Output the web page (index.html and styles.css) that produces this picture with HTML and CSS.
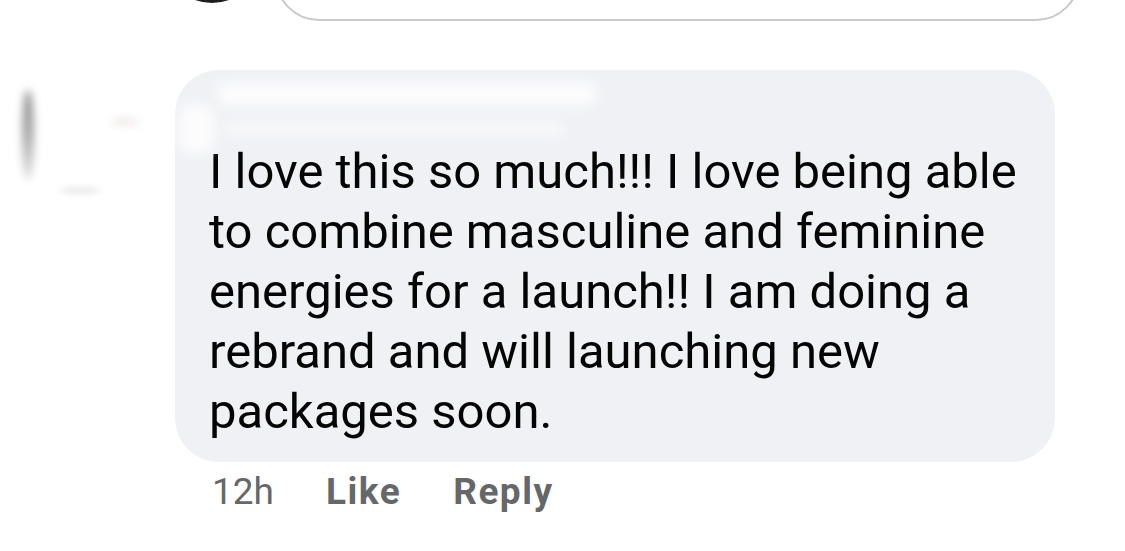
FILE: index.html
```html
<!DOCTYPE html>
<html>
<head>
<meta charset="utf-8">
<link rel="stylesheet" href="styles.css">
</head>
<body>
<div class="composer">
  <div class="me-avatar"></div>
  <div class="input"></div>
</div>
<div class="comment">
  <div class="avatar">
    <span class="smudge s1"></span>
    <span class="smudge s2"></span>
    <span class="smudge s3"></span>
  </div>
  <div class="body">
    <div class="bubble">
      <div class="name">
        <span class="redact r1"></span>
        <span class="redact r2"></span>
        <span class="redact r3"></span>
      </div>
      <p class="text">I love this so much!!! I love being able to combine masculine and feminine energies for a launch!! I am doing a rebrand and will launching new packages soon.</p>
    </div>
    <div class="actions">
      <span class="time">12h</span>
      <span class="act">Like</span>
      <span class="act">Reply</span>
    </div>
  </div>
</div>
</body>
</html>
```
FILE: styles.css
```css
html, body {
  margin: 0;
  background: #ffffff;
  font-family: Roboto, "Liberation Sans", sans-serif;
  overflow: hidden;
}
.composer {
  height: 22px;
  overflow: hidden;
  display: flex;
  align-items: flex-end;
}
.me-avatar {
  width: 100px;
  height: 100px;
  border-radius: 50%;
  background: #1e1e1e;
  margin-left: 162px;
  margin-bottom: 19px;
  flex: none;
}
.input {
  flex: none;
  margin-left: 13px;
  width: 801px;
  height: 90px;
  border: 2px solid #c9c9c9;
  border-radius: 44px;
  margin-bottom: 1px;
}
.comment {
  display: flex;
  margin-top: 48px;
}
.avatar {
  position: relative;
  width: 175px;
  height: 200px;
  flex: none;
}
.smudge {
  position: absolute;
  border-radius: 50%;
}
.s1 {
  left: 22px; top: 20px; width: 12px; height: 90px;
  background: linear-gradient(#555, #888 50%, #ccc);
  filter: blur(4px);
  opacity: 0.7;
}
.s2 { left: 60px; top: 118px; width: 40px; height: 5px; background: #aaa; filter: blur(3px); opacity: 0.35; }
.s3 { left: 110px; top: 48px; width: 30px; height: 8px; background: #e0cccc; filter: blur(4px); opacity: 0.4; }
.body {
  display: flex;
  flex-direction: column;
}
.bubble {
  width: 880px;
  box-sizing: border-box;
  background: #f0f1f5;
  border-radius: 44px;
  padding: 0 8px 20px 34px;
}
.name {
  position: relative;
  height: 72px;
}
.redact {
  position: absolute;
  background: #ffffff;
  border-radius: 14px;
  filter: blur(6px);
}
.r1 { left: 8px; top: 12px; width: 380px; height: 24px; opacity: 0.8; }
.r2 { left: 16px; top: 52px; width: 340px; height: 14px; opacity: 0.55; }
.r3 { left: -30px; top: 34px; width: 36px; height: 50px; opacity: 0.8; }
.text {
  margin: 0;
  font-size: 49px;
  line-height: 60px;
  color: #050505;
}
.actions {
  display: flex;
  gap: 52px;
  padding-left: 37px;
  margin-top: 8px;
  font-size: 37px;
  line-height: 44px;
  color: #666769;
}
.act {
  font-weight: 700;
  letter-spacing: 1.5px;
}
```
